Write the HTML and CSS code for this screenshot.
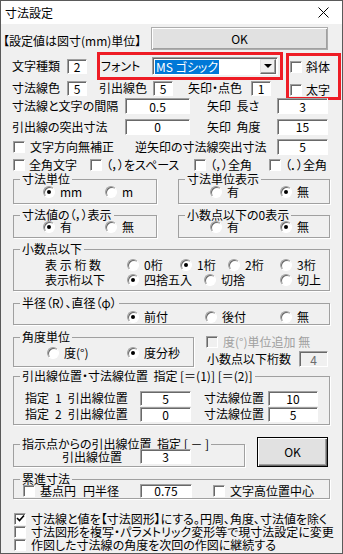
FILE: index.html
```html
<!DOCTYPE html>
<html lang="ja">
  <head>
    <meta charset="UTF-8" />
    <title>寸法設定</title>
    <link rel="stylesheet" href="styles.css">
  </head>
  <body>
    <div class="win">
      <div class="title">
        <span>寸法設定</span>
        <svg class="close" width="11" height="11" viewBox="0 0 11 11"><path d="M0.5 0.5L10.5 10.5M10.5 0.5L0.5 10.5" stroke="#000" stroke-width="1" fill="none"/></svg>
      </div>

      <div class="row row-a">
        <span class="note">【設定値は図寸(mm)単位】</span>
        <span class="btn btn-top">OK</span>
      </div>

      <div class="row-bc">
        <div class="bc-left">
          <div class="row row-b">
            <span class="lbl w-kind">文字種類</span>
            <span class="tb tb-s">2</span>
            <div class="redbox font-box">
              <span class="lbl w-font">フォント</span>
              <div class="sel">
                <span class="sel-text">MS ゴシック</span>
                <span class="sel-btn"></span>
              </div>
            </div>
          </div>
          <div class="row row-c">
            <span class="lbl w-kind">寸法線色</span>
            <span class="tb tb-s">5</span>
            <span class="lbl w-lead">引出線色</span>
            <span class="tb tb-s">5</span>
            <span class="lbl w-arrow">矢印・点色</span>
            <span class="tb tb-s">1</span>
          </div>
        </div>
        <div class="redbox style-box">
          <label class="chk"><i class="cb"></i>斜体</label>
          <label class="chk"><i class="cb"></i>太字</label>
        </div>
      </div>

      <div class="row row-d">
        <span class="lbl w-gap">寸法線と文字の間隔</span>
        <span class="tb tb-m">0.5</span>
        <span class="lbl w-arr">矢印  長さ</span>
        <span class="tb tb-r">3</span>
      </div>
      <div class="row row-e">
        <span class="lbl w-gap">引出線の突出寸法</span>
        <span class="tb tb-m">0</span>
        <span class="lbl w-arr">矢印  角度</span>
        <span class="tb tb-r">15</span>
      </div>
      <div class="row row-f">
        <label class="chk w-dir"><i class="cb"></i>文字方向無補正</label>
        <span class="lbl w-rev">逆矢印の寸法線突出寸法</span>
        <span class="tb tb-r">5</span>
      </div>
      <div class="row row-g">
        <label class="chk w-c1"><i class="cb"></i>全角文字</label>
        <label class="chk w-c2"><i class="cb"></i>（，）をスペース</label>
        <label class="chk w-c3"><i class="cb"></i>（，）全角</label>
        <label class="chk"><i class="cb"></i>（．）全角</label>
      </div>

      <div class="pair">
        <fieldset class="grp g-left">
          <legend>寸法単位</legend>
          <div class="opts opts-l">
            <span class="opt"><i class="rb on"></i>mm</span>
            <span class="opt"><i class="rb"></i>m</span>
          </div>
        </fieldset>
        <fieldset class="grp g-right">
          <legend>寸法単位表示</legend>
          <div class="opts opts-r">
            <span class="opt"><i class="rb"></i>有</span>
            <span class="opt"><i class="rb on"></i>無</span>
          </div>
        </fieldset>
      </div>

      <div class="pair pair-2">
        <fieldset class="grp g-left">
          <legend>寸法値の（，）表示</legend>
          <div class="opts opts-l">
            <span class="opt"><i class="rb on"></i>有</span>
            <span class="opt"><i class="rb"></i>無</span>
          </div>
        </fieldset>
        <fieldset class="grp g-right">
          <legend>小数点以下の0表示</legend>
          <div class="opts opts-r">
            <span class="opt"><i class="rb"></i>有</span>
            <span class="opt"><i class="rb on"></i>無</span>
          </div>
        </fieldset>
      </div>

      <fieldset class="grp g-full g-decimal">
        <legend>小数点以下</legend>
        <div class="opts digits">
          <span class="lbl">表 示 桁 数</span>
          <span class="opt"><i class="rb"></i>0桁</span>
          <span class="opt"><i class="rb on"></i>1桁</span>
          <span class="opt"><i class="rb"></i>2桁</span>
          <span class="opt"><i class="rb"></i>3桁</span>
        </div>
        <div class="opts rounding">
          <span class="lbl">表示桁以下</span>
          <span class="opt"><i class="rb on"></i>四捨五入</span>
          <span class="opt"><i class="rb"></i>切捨</span>
          <span class="opt"><i class="rb"></i>切上</span>
        </div>
      </fieldset>

      <fieldset class="grp g-full g-radius">
        <legend>半径（R）、直径（φ）</legend>
        <div class="opts radius">
          <span class="opt"><i class="rb on"></i>前付</span>
          <span class="opt"><i class="rb"></i>後付</span>
          <span class="opt"><i class="rb"></i>無</span>
        </div>
      </fieldset>

      <div class="angle-row">
        <fieldset class="grp g-angle">
          <legend>角度単位</legend>
          <div class="opts angle">
            <span class="opt"><i class="rb"></i>度(°)</span>
            <span class="opt"><i class="rb on"></i>度分秒</span>
          </div>
        </fieldset>
        <div class="angle-side">
          <label class="chk off"><i class="cb"></i>度(°)単位追加 無</label>
          <div class="row row-digits">
            <span class="lbl w-digits">小数点以下桁数</span>
            <span class="tb tb-off">4</span>
          </div>
        </div>
      </div>

      <fieldset class="grp g-full g-pos">
        <legend>引出線位置・寸法線位置&nbsp; 指定 [＝(1)] [＝(2)]</legend>
        <div class="row pos-row first">
          <span class="lbl w-pos">指定&ensp;1&ensp;引出線位置</span>
          <span class="tb tb-p">5</span>
          <span class="lbl w-dim">寸法線位置</span>
          <span class="tb tb-d">10</span>
        </div>
        <div class="row pos-row">
          <span class="lbl w-pos">指定&ensp;2&ensp;引出線位置</span>
          <span class="tb tb-p">0</span>
          <span class="lbl w-dim">寸法線位置</span>
          <span class="tb tb-d">5</span>
        </div>
      </fieldset>

      <div class="point-row">
        <fieldset class="grp g-point">
          <legend>指示点からの引出線位置&nbsp; 指定 [ － ]</legend>
          <div class="row point-in">
            <span class="lbl w-lp">引出線位置</span>
            <span class="tb tb-p">3</span>
          </div>
        </fieldset>
        <span class="btn btn-def">OK</span>
      </div>

      <fieldset class="grp g-full g-cum">
        <legend>累進寸法</legend>
        <div class="row cum-in">
          <label class="chk w-base"><i class="cb"></i>基点円</label>
          <span class="lbl w-rad">円半径</span>
          <span class="tb tb-c">0.75</span>
          <label class="chk ml-mid"><i class="cb"></i>文字高位置中心</label>
        </div>
      </fieldset>

      <div class="bottom">
        <label class="chk"><i class="cb"><svg width="9" height="9" viewBox="0 0 9 9"><path d="M1 4L3.5 6.5L8 1.5" stroke="#000" stroke-width="1.6" fill="none"/></svg></i>寸法線と値を【寸法図形】にする。円周、角度、寸法値を除く</label>
        <label class="chk"><i class="cb"></i>寸法図形を複写・パラメトリック変形等で現寸法設定に変更</label>
        <label class="chk"><i class="cb"></i>作図した寸法線の角度を次回の作図に継続する</label>
      </div>
    </div>
  </body>
</html>
```

FILE: styles.css
```css
* {
  margin: 0;
  padding: 0;
  box-sizing: border-box;
}
body {
  width: 343px;
  height: 554px;
  background-color: #f0f0f0;
  color: #000;
  font: 12px/12px "Noto Sans CJK JP", "Noto Sans", sans-serif;
  font-feature-settings: "palt";
}
.win {
  width: 343px;
  height: 554px;
  border: 1px solid #5a5a5a;
  background-color: #f0f0f0;
  overflow: hidden;
}
.title {
  height: 23px;
  background-color: #fff;
  display: flex;
  align-items: center;
  justify-content: space-between;
  padding: 0 13px 0 4px;
}
.row {
  display: flex;
  align-items: center;
}
.lbl {
  flex: none;
  white-space: pre;
}

/* 共通パーツ */
.tb {
  flex: none;
  display: flex;
  align-items: center;
  justify-content: center;
  height: 15px;
  padding-top: 1px;
  background-color: #fff;
  border: 1px solid;
  border-color: #a0a0a0 #fff #fff #a0a0a0;
  box-shadow: inset 1px 1px #696969;
}
.tb-off {
  width: 29px;
  height: 16px;
  background-color: #f0f0f0;
  color: #6d6d6d;
}
.cb {
  flex: none;
  width: 12px;
  height: 12px;
  display: flex;
  align-items: center;
  justify-content: center;
  background-color: #fff;
  border: 1px solid;
  border-color: #a0a0a0 #fff #fff #a0a0a0;
  box-shadow: inset 1px 1px #696969;
}
.chk {
  flex: none;
  display: flex;
  align-items: center;
  gap: 5px;
  white-space: pre;
}
.chk.off {
  color: #a0a0a0;
}
.chk.off .cb {
  background-color: #f0f0f0;
}
.rb {
  flex: none;
  position: relative;
  width: 12px;
  height: 12px;
  border-radius: 50%;
  background-color: #fff;
  border: 1px solid;
  border-color: #a0a0a0 #fff #fff #a0a0a0;
  box-shadow: inset 1px 1px #696969;
}
.rb.on::after {
  content: '';
  position: absolute;
  left: 3px;
  top: 3px;
  width: 4px;
  height: 4px;
  border-radius: 50%;
  background-color: #000;
}
.opt {
  display: flex;
  align-items: center;
  gap: 5px;
  white-space: pre;
}
.btn {
  flex: none;
  display: flex;
  align-items: center;
  justify-content: center;
  background-color: #e1e1e1;
  border: 1px solid #adadad;
  box-shadow: inset 1px 1px #fff, inset -1px -1px #a0a0a0;
}
.redbox {
  flex: none;
  border: 3px solid #ee1c25;
}

/* 上段 */
.note {
  margin: 11px 0 0 2px;
  width: 148px;
}
.row-a {
  height: 28px;
  align-items: flex-start;
}
.btn-top {
  width: 177px;
  height: 23px;
  margin-top: 3px;
}
.row-bc {
  display: flex;
  height: 44px;
}
.bc-left {
  width: 285px;
}
.row-b {
  height: 28px;
}
.row-c {
  height: 16px;
}
.w-kind {
  margin-left: 11px;
  width: 55px;
}
.tb-s {
  width: 20px;
}
.font-box {
  margin-left: 10px;
  width: 186px;
  height: 28px;
  display: flex;
  align-items: center;
}
.w-font {
  margin-left: 1px;
  width: 51px;
}
.sel {
  width: 126px;
  height: 18px;
  display: flex;
  align-items: center;
  justify-content: space-between;
  padding: 2px 1px 1px 2px;
  background-color: #fff;
  border: 1px solid;
  border-color: #a0a0a0 #fff #fff #a0a0a0;
  box-shadow: inset 1px 1px #696969;
}
.sel-text {
  height: 14px;
  padding: 1px 1px 0;
  background-color: #0078d7;
  color: #fff;
}
.sel-btn {
  position: relative;
  width: 16px;
  height: 15px;
  background-color: #f0f0f0;
  border: 1px solid;
  border-color: #e3e3e3 #696969 #696969 #e3e3e3;
  box-shadow: inset -1px -1px #a0a0a0;
}
.sel-btn::after {
  content: '';
  position: absolute;
  left: 3px;
  top: 4px;
  border-left: 4px solid transparent;
  border-right: 4px solid transparent;
  border-top: 4px solid #000;
}
.w-lead {
  margin-left: 12px;
  width: 54px;
}
.w-arrow {
  margin-left: 15px;
  width: 63px;
}
.style-box {
  margin-top: 1px;
  width: 55px;
  height: 47px;
  padding: 1px 0 0 1px;
  display: flex;
  flex-direction: column;
}
.style-box .chk {
  height: 19px;
  gap: 4px;
}
.style-box .chk + .chk {
  margin-top: 4px;
}

.row-d {
  height: 20px;
}
.row-e {
  height: 21px;
}
.row-f {
  height: 19px;
}
.row-g {
  height: 17px;
}
.w-gap {
  margin-left: 11px;
  width: 113px;
}
.tb-m {
  width: 65px;
  height: 16px;
}
.w-arr {
  margin-left: 17px;
  width: 70px;
}
.tb-r {
  width: 51px;
  height: 16px;
}
.w-dir {
  margin-left: 12px;
  width: 122px;
}
.w-rev {
  width: 142px;
}
.row-g .chk {
  gap: 4px;
}
.w-c1 {
  margin-left: 12px;
  width: 77px;
}
.w-c2 {
  width: 104px;
}
.w-c3 {
  width: 75px;
}

/* グループ枠 */
.grp {
  min-width: 0;
  border: 1px solid #a0a0a0;
  box-shadow: 1px 1px 0 #fff;
  padding: 0;
}
.grp legend {
  margin-left: 6px;
  padding: 0 2px;
  line-height: 12px;
  white-space: pre;
}
.opts {
  display: grid;
  align-items: center;
}
.pair {
  display: flex;
  margin-left: 12px;
}
.g-left {
  width: 144px;
  padding-bottom: 5px;
}
.g-right {
  margin-left: 21px;
  width: 152px;
  padding-bottom: 5px;
}
.pair .opts {
  height: 12px;
  margin-top: 1px;
}
.pair-2 {
  margin-top: 5px;
}
.pair-2 .grp {
  padding-bottom: 4px;
}
.pair-2 .opts {
  margin-top: 0;
}
.opts-l {
  padding-left: 29px;
  grid-template-columns: 62px auto;
}
.opts-r {
  padding-left: 31px;
  grid-template-columns: 70px auto;
}
.g-full {
  margin-left: 12px;
  width: 317px;
}
.g-decimal {
  margin-top: 5px;
  padding-bottom: 3px;
}
.g-decimal .opts {
  height: 14px;
  padding-left: 31px;
}
.digits {
  margin-top: 3px;
  grid-template-columns: 82px 53px 48px 52px auto;
}
.rounding {
  margin-top: 1px;
  grid-template-columns: 82px 77px 76px auto;
}
.g-radius {
  margin-top: 6px;
}
.radius {
  height: 14px;
  margin-top: 1px;
  padding-left: 113px;
  grid-template-columns: 78px 75px auto;
}
.angle-row {
  display: flex;
  margin: 6px 0 0 12px;
}
.g-angle {
  width: 181px;
  padding-bottom: 4px;
}
.angle {
  height: 14px;
  margin-top: 3px;
  padding-left: 33px;
  grid-template-columns: 80px auto;
}
.angle-side {
  margin-left: 12px;
}
.angle-side .chk {
  height: 14px;
  margin-top: 4px;
}
.row-digits {
  margin-top: 2px;
  height: 16px;
}
.w-digits {
  margin-left: 1px;
  width: 92px;
}
.g-pos {
  margin-top: 3px;
  padding-bottom: 2px;
}
.pos-row {
  height: 16px;
}
.pos-row.first {
  margin-top: 8px;
}
.w-pos {
  margin-left: 11px;
  width: 115px;
}
.tb-p {
  width: 51px;
}
.w-dim {
  margin-left: 13px;
  width: 64px;
}
.tb-d {
  width: 50px;
}
.point-row {
  display: flex;
  align-items: flex-start;
  margin-left: 12px;
}
.g-point {
  margin-top: 13px;
  width: 232px;
  padding-bottom: 2px;
}
.point-in {
  height: 15px;
  margin-top: -1px;
}
.w-lp {
  margin-left: 48px;
  width: 78px;
}
.btn-def {
  margin: 12px 0 0 12px;
  width: 71px;
  height: 30px;
  border: 1px solid #000;
  box-shadow: inset 1px 1px #fff, inset -1px -1px #696969, inset -2px -2px #a0a0a0;
}
.g-cum {
  margin-top: 6px;
  padding-bottom: 1px;
}
.cum-in {
  height: 13px;
  margin-top: -1px;
  padding-left: 9px;
}
.w-base {
  width: 60px;
}
.w-rad {
  width: 57px;
}
.tb-c {
  width: 52px;
  height: 14px;
}
.ml-mid {
  margin-left: 21px;
}
.bottom {
  margin-top: 13px;
}
.bottom .chk {
  height: 13px;
  margin-left: 13px;
}
```
